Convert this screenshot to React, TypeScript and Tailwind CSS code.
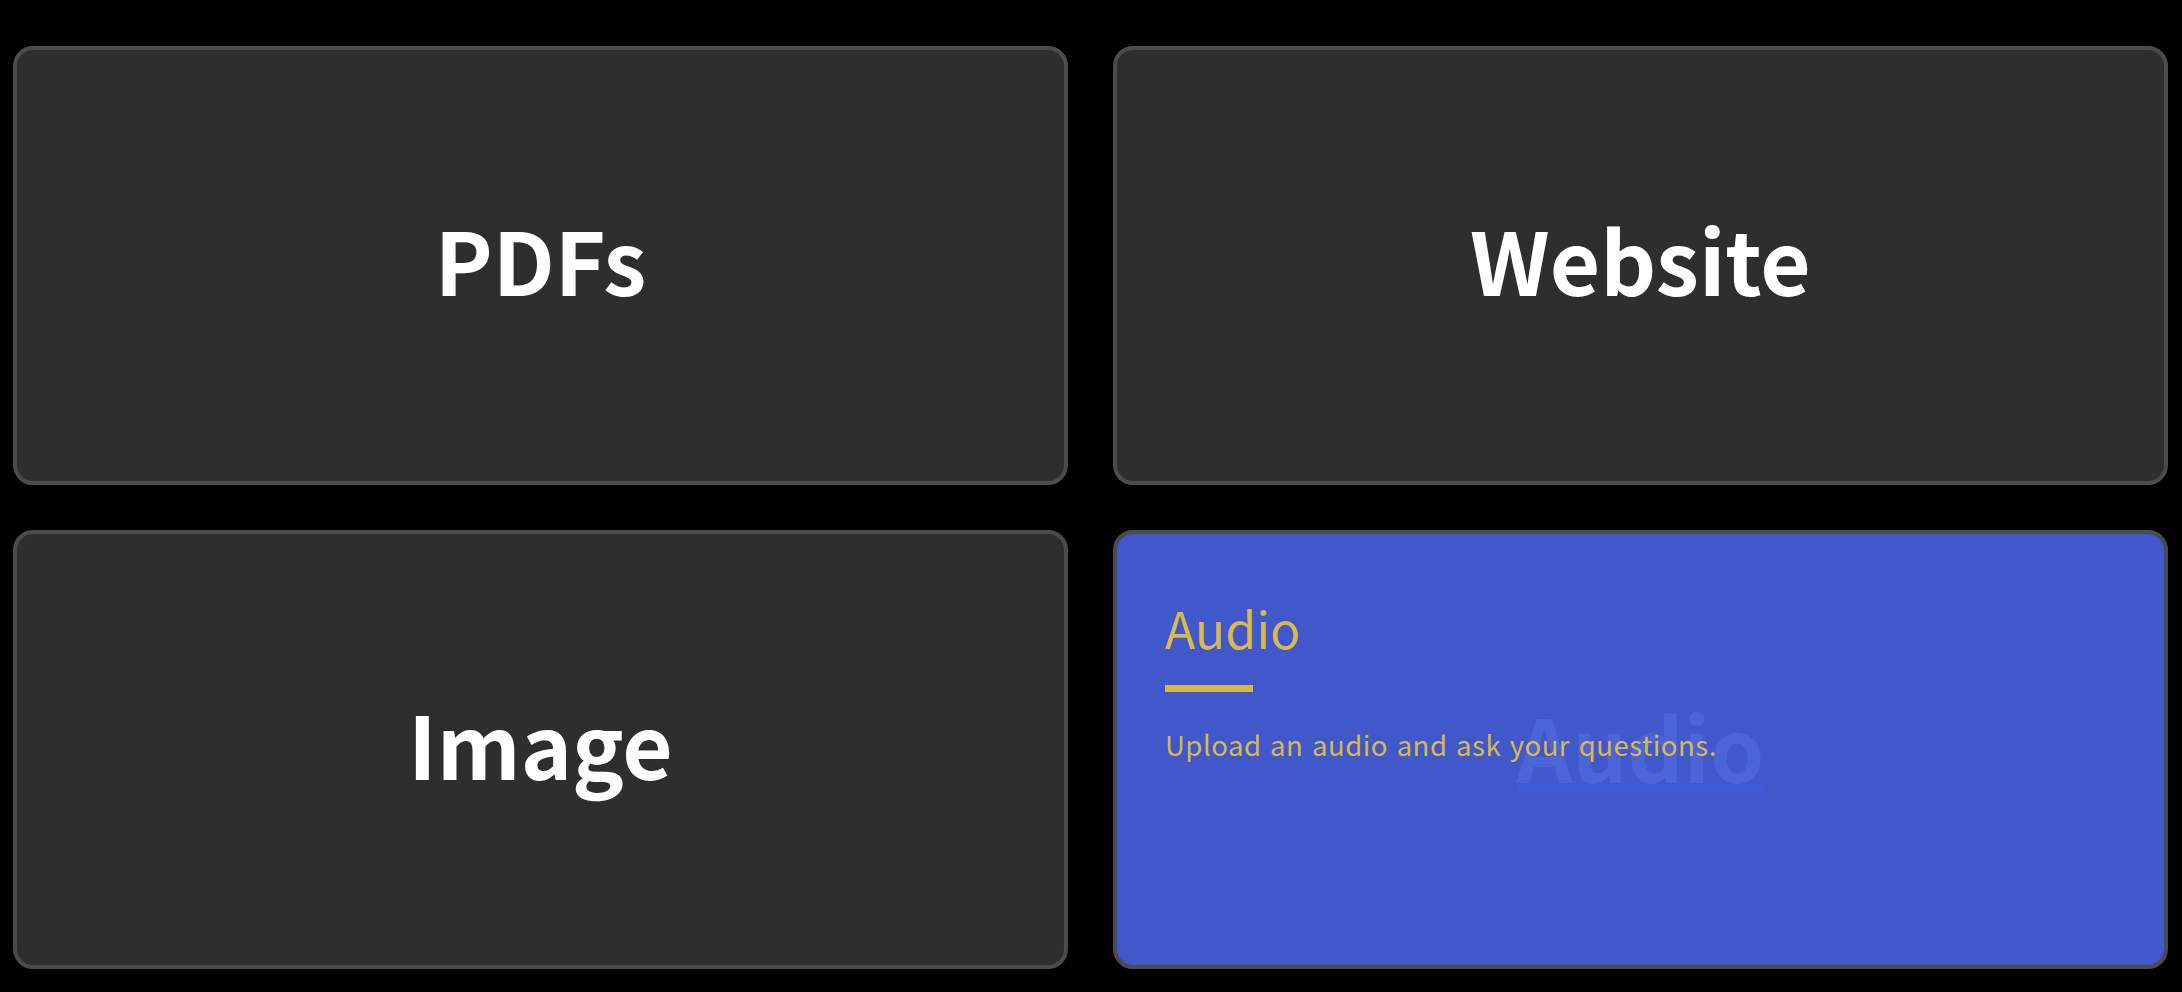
import React from 'react';

const FONT = { fontFamily: '"Noto Sans CJK SC", "Noto Sans", sans-serif' };

interface SourceCardProps {
  label: string;
}

const SourceCard: React.FC<SourceCardProps> = ({ label }) => (
  <div className="flex items-center justify-center h-[439px] pb-[14px] rounded-[20px] border-4 border-[#4b4b4b] bg-[#2e2e2e]">
    <span className="text-[87px] leading-none font-bold text-white">{label}</span>
  </div>
);

const ActiveCard: React.FC = () => (
  <div className="relative h-[439px] rounded-[20px] border-4 border-[#4b4b4b] bg-[#4058c9] overflow-hidden">
    <div className="absolute inset-0 flex items-center justify-center">
      <span className="text-[87px] leading-[77px] font-bold text-[#4b64d8] border-b-8 border-[#3f5bd6]">Audio</span>
    </div>
    <div className="relative pl-[48px] pt-[68px]">
      <h3 className="text-[50px] leading-none text-[#d6b94f]">Audio</h3>
      <div className="mt-[33px] w-[88px] h-[7px] bg-[#d6b94f]" />
      <p className="mt-[39px] text-[27.5px] leading-none tracking-[0.5px] [word-spacing:2px] text-[#d6b94f]">
        Upload an audio and ask your questions.
      </p>
    </div>
  </div>
);

export default function App() {
  return (
    <div className="min-h-screen bg-black pt-[46px] pl-[13px] pr-[14px]" style={FONT}>
      <div className="grid grid-cols-2 gap-[45px]">
        <SourceCard label="PDFs" />
        <SourceCard label="Website" />
        <SourceCard label="Image" />
        <ActiveCard />
      </div>
    </div>
  );
}
